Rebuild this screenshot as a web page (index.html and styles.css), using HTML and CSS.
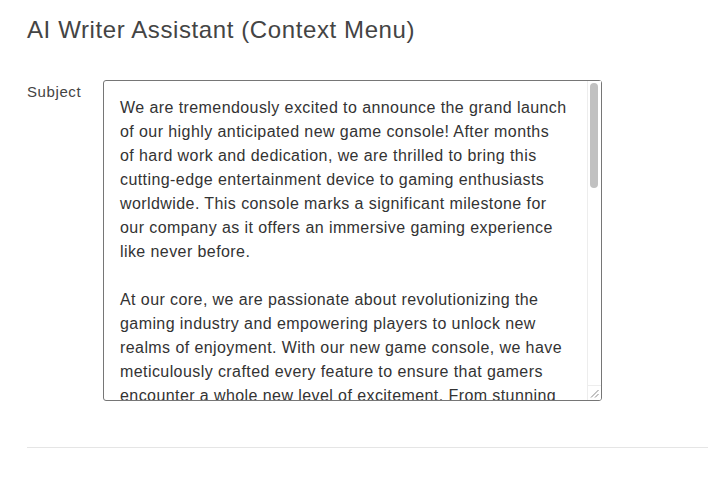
FILE: index.html
```html
<!DOCTYPE html>
<html lang="en">
<head>
<meta charset="utf-8">
<title>AI Writer Assistant (Context Menu)</title>
<link rel="stylesheet" href="styles.css">
</head>
<body>
<main class="page">
  <h1 class="title">AI Writer Assistant (Context Menu)</h1>
  <form class="form">
    <div class="field">
      <label class="label" for="subject">Subject</label>
      <div class="textarea-wrap">
        <textarea class="textarea" id="subject">We are tremendously excited to announce the grand launch of our highly anticipated new game console! After months of hard work and dedication, we are thrilled to bring this cutting-edge entertainment device to gaming enthusiasts worldwide. This console marks a significant milestone for our company as it offers an immersive gaming experience like never before.

At our core, we are passionate about revolutionizing the gaming industry and empowering players to unlock new realms of enjoyment. With our new game console, we have meticulously crafted every feature to ensure that gamers encounter a whole new level of excitement. From stunning graphics and lightning-fast performance to a vast library of exclusive titles, every detail has been designed with players in mind.

Our team of talented engineers and designers has worked tirelessly to push the boundaries of what is possible. The console features state-of-the-art hardware, seamless online connectivity, and an intuitive interface that makes it easy for players of all ages to jump right into the action.

We would like to express our heartfelt gratitude to our partners, developers, and the passionate gaming community who have supported us throughout this journey. Your feedback and enthusiasm have been instrumental in shaping this console into what it is today.

The new game console will be available at major retailers and through our online store starting next month. Stay tuned for more announcements, exclusive launch events, and special offers. We can't wait for you to experience it yourself!</textarea>
        <div class="scrollbar" aria-hidden="true">
          <div class="scrollbar-thumb"></div>
        </div>
        <div class="resizer" aria-hidden="true">
          <svg width="13" height="14" viewBox="0 0 13 14">
            <path d="M3 11.5 L10.5 4 M7 11.5 L10.5 8" stroke="#8a8a8a" stroke-width="1" fill="none"/>
          </svg>
        </div>
      </div>
    </div>
  </form>
  <hr class="divider">
</main>
</body>
</html>
```

FILE: styles.css
```css
html, body {
  margin: 0;
  padding: 0;
  background: #ffffff;
}

body {
  font-family: "Liberation Sans", Arial, sans-serif;
  color: #333333;
}

.page {
  padding: 16px 0 0 27px;
}

.title {
  margin: 0;
  font-size: 24px;
  line-height: 28px;
  font-weight: 400;
  letter-spacing: 0.6px;
  color: #444444;
}

.form {
  margin-top: 36px;
}

.field {
  display: grid;
  grid-template-columns: 76px 499px;
  align-items: start;
}

.label {
  padding-top: 3px;
  font-size: 15px;
  line-height: 17px;
  letter-spacing: 0.6px;
  color: #444444;
}

.textarea-wrap {
  position: relative;
  width: 499px;
  height: 321px;
}

.textarea {
  display: block;
  box-sizing: border-box;
  width: 499px;
  height: 321px;
  margin: 0;
  padding: 15px 34px 15px 16px;
  border: 1px solid #767676;
  border-radius: 3px;
  font-family: "Liberation Sans", Arial, sans-serif;
  font-size: 16px;
  line-height: 24px;
  letter-spacing: 0.42px;
  color: #333333;
  resize: none;
  overflow: hidden;
}

.scrollbar {
  position: absolute;
  top: 1px;
  right: 1px;
  bottom: 16px;
  width: 13px;
  border-left: 1px solid #ededed;
  background: #ffffff;
}

.scrollbar-thumb {
  position: absolute;
  top: 2px;
  left: 2px;
  width: 8px;
  height: 105px;
  border-radius: 4px;
  background: #c1c1c1;
}

.resizer {
  position: absolute;
  right: 1px;
  bottom: 1px;
  width: 13px;
  height: 14px;
  border-left: 1px solid #ededed;
  border-top: 1px solid #ededed;
  background: #ffffff;
  border-bottom-right-radius: 2px;
}

.resizer svg {
  display: block;
}

.divider {
  margin: 46px 0 0;
  border: 0;
  border-top: 1px solid #e5e5e5;
  height: 0;
}
```
